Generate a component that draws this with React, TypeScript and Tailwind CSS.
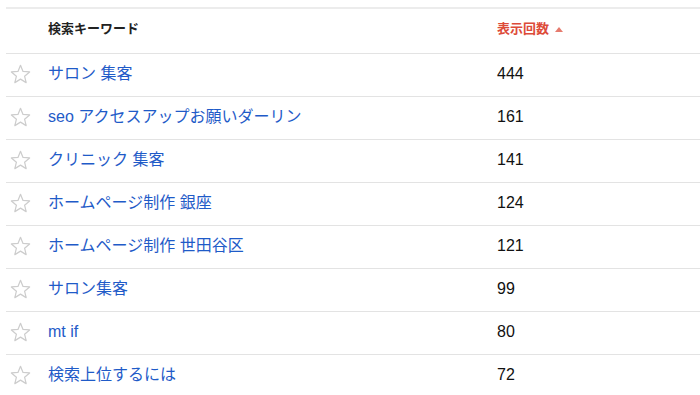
const rows = [
  { keyword: 'サロン 集客', count: 444 },
  { keyword: 'seo アクセスアップお願いダーリン', count: 161 },
  { keyword: 'クリニック 集客', count: 141 },
  { keyword: 'ホームページ制作 銀座', count: 124 },
  { keyword: 'ホームページ制作 世田谷区', count: 121 },
  { keyword: 'サロン集客', count: 99 },
  { keyword: 'mt if', count: 80 },
  { keyword: '検索上位するには', count: 72 },
]

function Star() {
  return (
    <svg width="21" height="20" viewBox="0 0 24 23" aria-hidden="true">
      <polygon
        points="12,1.5 14.9,8.6 22.5,9.1 16.7,14 18.5,21.4 12,17.4 5.5,21.4 7.3,14 1.5,9.1 9.1,8.6"
        fill="none"
        stroke="#cdcdcd"
        strokeWidth="1.4"
        strokeLinejoin="round"
      />
    </svg>
  )
}

export default function App() {
  return (
    <div className="min-h-[395px] bg-white pt-[7px] pl-[6px] font-['Liberation_Sans','Noto_Sans_CJK_JP',sans-serif]">
      <div className="border-t-2 border-[#ececec]">
        <div className="flex h-[45px] items-center border-b border-[#e3e3e3] pb-[4px] text-[13px] font-bold">
          <div className="w-[42px] shrink-0" />
          <div className="w-[449px] shrink-0 text-[#222]">検索キーワード</div>
          <div className="flex items-center gap-[6px] text-[#dd4b39]">
            表示回数
            <svg width="8" height="5" viewBox="0 0 8 5" aria-hidden="true">
              <polygon points="4,0 8,5 0,5" fill="#e67b6e" />
            </svg>
          </div>
        </div>
        {rows.map((r) => (
          <div
            key={r.keyword}
            className="flex h-[43px] items-center border-b border-[#e3e3e3] pb-[2px] text-[16px]"
          >
            <div className="flex w-[42px] shrink-0 pl-[4px]">
              <Star />
            </div>
            <div className="w-[449px] shrink-0 text-[#1f5bc8]">{r.keyword}</div>
            <div className="text-[#111]">{r.count}</div>
          </div>
        ))}
      </div>
    </div>
  )
}
